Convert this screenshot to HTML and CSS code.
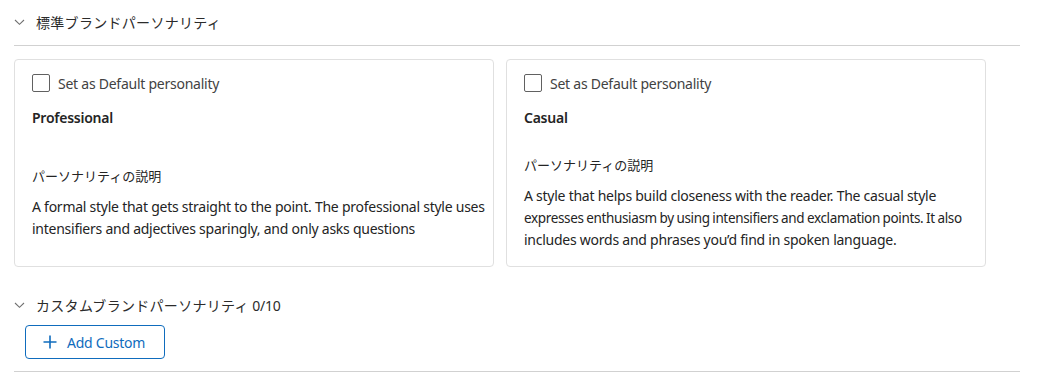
FILE: index.html
```html
<!DOCTYPE html>
<html lang="ja">
<head>
<meta charset="utf-8">
<link rel="stylesheet" href="styles.css">
</head>
<body>
<div class="page">
  <section class="section">
    <div class="section-head">
      <svg class="chev" width="11" height="10" viewBox="0 0 11 10"><path d="M1 3 L5.5 7.3 L10 3" fill="none" stroke="#707070" stroke-width="1.1"/></svg>
      <span class="section-title">標準ブランドパーソナリティ</span>
    </div>
    <div class="divider"></div>
    <div class="cards">
      <div class="card">
        <label class="check-row"><span class="checkbox"></span><span class="check-label">Set as Default personality</span></label>
        <div class="card-title">Professional</div>
        <div class="desc-area">
          <div class="desc-label">パーソナリティの説明</div>
          <p class="desc-text">A formal style that gets straight to the point. The professional style uses intensifiers and adjectives sparingly, and only asks questions</p>
        </div>
      </div>
      <div class="card">
        <label class="check-row"><span class="checkbox"></span><span class="check-label">Set as Default personality</span></label>
        <div class="card-title">Casual</div>
        <div class="desc-area">
          <div class="desc-label">パーソナリティの説明</div>
          <p class="desc-text">A style that helps build closeness with the reader. The casual style <span class="tight">expresses enthusiasm by using intensifiers and exclamation points. It also</span> includes words and phrases you’d find in spoken language.</p>
        </div>
      </div>
    </div>
  </section>
  <section class="section custom">
    <div class="section-head">
      <svg class="chev" width="11" height="10" viewBox="0 0 11 10"><path d="M1 3 L5.5 7.3 L10 3" fill="none" stroke="#707070" stroke-width="1.1"/></svg>
      <span class="section-title">カスタムブランドパーソナリティ <span class="count">0/10</span></span>
    </div>
    <button class="add-btn" type="button">
      <svg width="14" height="14" viewBox="0 0 14 14"><path d="M7 0.5 V13.5 M0.5 7 H13.5" stroke="#0f6cbd" stroke-width="1.6" fill="none"/></svg>
      <span>Add Custom</span>
    </button>
    <div class="divider bottom"></div>
  </section>
</div>
</body>
</html>
```

FILE: styles.css
```css
* { box-sizing: border-box; }
body {
  margin: 0;
  background: #ffffff;
  font-family: "Segoe UI", "Noto Sans", "Noto Sans CJK JP", sans-serif;
  font-size: 14px;
  letter-spacing: -0.25px;
  color: #242424;
}
.page {
  padding: 12px 17px 0 14px;
}
.section-head {
  display: flex;
  align-items: center;
  height: 20px;
  gap: 11px;
}
.chev { flex: none; }
.section-title {
  font-family: "Noto Sans CJK JP", sans-serif;
  font-size: 14px;
  letter-spacing: 0.3px;
  color: #2b2b2b;
  line-height: 20px;
}
.count {
  font-family: "Segoe UI", "Noto Sans", sans-serif;
  letter-spacing: -0.25px;
}
.divider {
  height: 1px;
  background: #d1d1d1;
  margin-top: 13px;
}
.cards {
  display: flex;
  gap: 12px;
  margin-top: 13px;
  align-items: stretch;
}
.card {
  width: 480px;
  border: 1px solid #e0e0e0;
  border-radius: 4px;
  padding: 8px 2px 15px 17px;
  display: flex;
  flex-direction: column;
}
.check-row {
  display: flex;
  align-items: center;
  height: 30px;
  gap: 8px;
}
.checkbox {
  width: 18px;
  height: 18px;
  border: 1px solid #616161;
  border-radius: 2px;
  flex: none;
}
.check-label {
  color: #424242;
  font-size: 14px;
}
.card-title {
  margin-top: 10px;
  font-weight: 600;
  line-height: 20px;
}
.desc-area {
  flex: 1;
  margin-top: 27px;
  display: flex;
  flex-direction: column;
  justify-content: center;
}
.desc-label {
  font-family: "Noto Sans CJK JP", sans-serif;
  font-size: 13px;
  letter-spacing: 0;
  line-height: 20px;
  color: #242424;
}
.desc-text {
  margin: 10px 0 0;
  line-height: 22px;
  color: #242424;
}
.tight {
  font-size: 13.5px;
  letter-spacing: -0.35px;
  word-spacing: -0.5px;
}
.custom {
  margin-top: 28px;
}
.add-btn {
  margin: 10px 0 0 11px;
  display: flex;
  align-items: center;
  gap: 10px;
  height: 34px;
  width: 140px;
  padding: 0 0 0 17px;
  border: 1px solid #0f6cbd;
  border-radius: 4px;
  background: #ffffff;
  color: #0f6cbd;
  font-family: "Segoe UI", "Noto Sans", sans-serif;
  font-size: 14px;
  letter-spacing: -0.25px;
}
.divider.bottom {
  margin-top: 12px;
}
```
